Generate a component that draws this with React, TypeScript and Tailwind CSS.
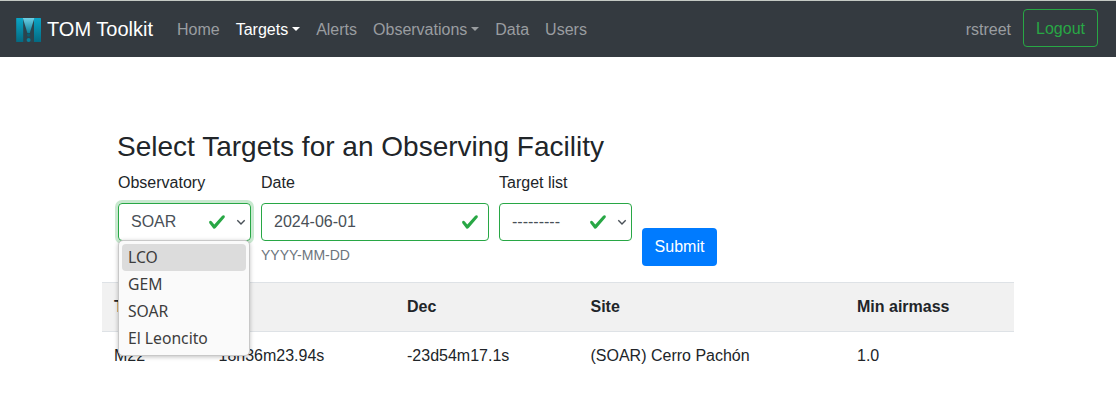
import React from "react";

const FACILITIES = ["LCO", "GEM", "SOAR", "El Leoncito"];

function Logo() {
  return (
    <svg width="26" height="26" viewBox="0 0 26 26" className="block shrink-0">
      <defs>
        <linearGradient id="pillar" x1="0" y1="0" x2="0" y2="1">
          <stop offset="0" stopColor="#0aa5c6" />
          <stop offset="1" stopColor="#046a82" />
        </linearGradient>
        <linearGradient id="wedge" x1="0" y1="0" x2="0" y2="1">
          <stop offset="0" stopColor="#6fcfe4" />
          <stop offset="1" stopColor="#0b7f9a" />
        </linearGradient>
      </defs>
      <rect x="7" y="1" width="12" height="24" fill="#2c434d" />
      <rect x="0.2" y="1" width="7" height="24" rx="0.5" fill="url(#pillar)" />
      <rect x="18" y="1" width="7" height="24" rx="0.5" fill="url(#pillar)" />
      <path d="M6.8 1h11.6l-4.6 15h-2.4z" fill="url(#wedge)" />
      <circle cx="12.6" cy="18" r="1.7" fill="#0b5c70" />
      <circle cx="12.6" cy="23" r="2" fill="#087f9b" />
    </svg>
  );
}

function Caret() {
  return <span className="ml-1 mt-[-2px] inline-block border-x-[4.8px] border-t-[4.8px] border-x-transparent border-t-current" />;
}

function Check() {
  return (
    <svg width="18" height="18" viewBox="0 0 8 8" className="shrink-0">
      <path fill="#28a745" d="M2.3 6.73L.6 4.53c-.4-1.04.46-1.4 1.1-.8l1.1 1.4 3.4-3.8c.6-.63 1.6-.27 1.2.7l-4 4.6c-.43.5-.8.4-1.1.1z" />
    </svg>
  );
}

function Chevron() {
  return (
    <svg width="10" height="8" viewBox="0 0 10 8" className="shrink-0">
      <path d="M1.3 2.2L5 5.9l3.7-3.7" fill="none" stroke="#495057" strokeWidth="1.4" />
    </svg>
  );
}

function FacilityMenu() {
  return (
    <ul className="absolute -left-px top-[36px] z-10 w-[132px] rounded-[5px] border border-[#c8c8c8] bg-[#fafafa] p-[3px] font-['Noto_Sans',sans-serif] text-[15.7px] text-[#3d3d3d] shadow-[0_1px_4px_rgba(0,0,0,0.25)]">
      {FACILITIES.map((name, i) => (
        <li
          key={name}
          className={`flex h-[27px] items-center rounded-[4px] pl-[6px] ${i === 0 ? "bg-[#dcdcdc]" : ""}`}
        >
          {name}
        </li>
      ))}
    </ul>
  );
}

function SelectField({ label, value, open = false }: { label: string; value: string; open?: boolean }) {
  return (
    <div className="w-[133px]">
      <div className="mb-2">{label}</div>
      <div
        className={`relative flex h-[38px] items-center rounded-[4px] border border-[#28a745] pl-3 pr-1 text-[#495057] ${
          open ? "shadow-[0_0_0_3px_rgba(40,167,69,0.25)]" : ""
        }`}
      >
        <span className="flex-1">{value}</span>
        <Check />
        <span className="ml-[10px] flex">
          <Chevron />
        </span>
        {open && <FacilityMenu />}
      </div>
    </div>
  );
}

export default function App() {
  return (
    <div className="h-[411px] overflow-hidden bg-white font-['Liberation_Sans',Arial,sans-serif] text-base text-[#212529]">
      <nav className="flex h-[57px] items-center border-t border-[#c4c9c4] bg-[#343a40] pl-4 pr-[18px] text-[#9a9da0]">
        <a className="flex items-center gap-[5px] text-xl text-white">
          <span className="pt-[2px]">
            <Logo />
          </span>
          TOM Toolkit
        </a>
        <div className="ml-6 flex flex-1 items-center gap-4 pt-px">
          <a>Home</a>
          <a className="flex items-center text-white">Targets<Caret /></a>
          <a>Alerts</a>
          <a className="flex items-center">Observations<Caret /></a>
          <a>Data</a>
          <a>Users</a>
        </div>
        <span className="mr-3 pt-px">rstreet</span>
        <button className="mb-[2px] h-[38px] w-[75px] rounded-[4px] border border-[#28a745] pt-[2px] text-[#28a745]">Logout</button>
      </nav>

      <main className="ml-[102px] w-[912px] pt-[73px]">
        <h3 className="mb-[7px] pl-[15px] text-[28px] leading-[34px] tracking-[0.01px]">Select Targets for an Observing Facility</h3>
        <form className="flex h-[111px] gap-[10px] pl-4">
          <SelectField label="Observatory" value="SOAR" open />
          <div className="w-[228px]">
            <div className="mb-2">Date</div>
            <div className="flex h-[38px] items-center rounded-[4px] border border-[#28a745] pl-3 pr-[9px] text-[#495057]">
              <span className="flex-1">2024-06-01</span>
              <Check />
            </div>
            <small className="mt-1 block text-sm leading-[21px] text-[#6c757d]">YYYY-MM-DD</small>
          </div>
          <SelectField label="Target list" value="---------" />
          <button type="button" className="mt-[57px] h-[38px] w-[75px] rounded-[4px] bg-[#007bff] text-white">
            Submit
          </button>
        </form>

        <table className="w-full table-fixed border-collapse text-left">
          <colgroup>
            <col className="w-[104.5px]" />
            <col className="w-[188.5px]" />
            <col className="w-[183.5px]" />
            <col className="w-[266.5px]" />
            <col />
          </colgroup>
          <thead>
            <tr className="h-[49px] border-y border-[#dee2e6] bg-[#f1f1f1]">
              <th className="px-3">Target</th>
              <th className="px-3">RA</th>
              <th className="px-3">Dec</th>
              <th className="px-3">Site</th>
              <th className="px-3">Min airmass</th>
            </tr>
          </thead>
          <tbody>
            <tr className="h-[48px]">
              <td className="px-3">M22</td>
              <td className="px-3">18h36m23.94s</td>
              <td className="px-3">-23d54m17.1s</td>
              <td className="px-3">(SOAR) Cerro Pachón</td>
              <td className="px-3">1.0</td>
            </tr>
          </tbody>
        </table>
      </main>
    </div>
  );
}
